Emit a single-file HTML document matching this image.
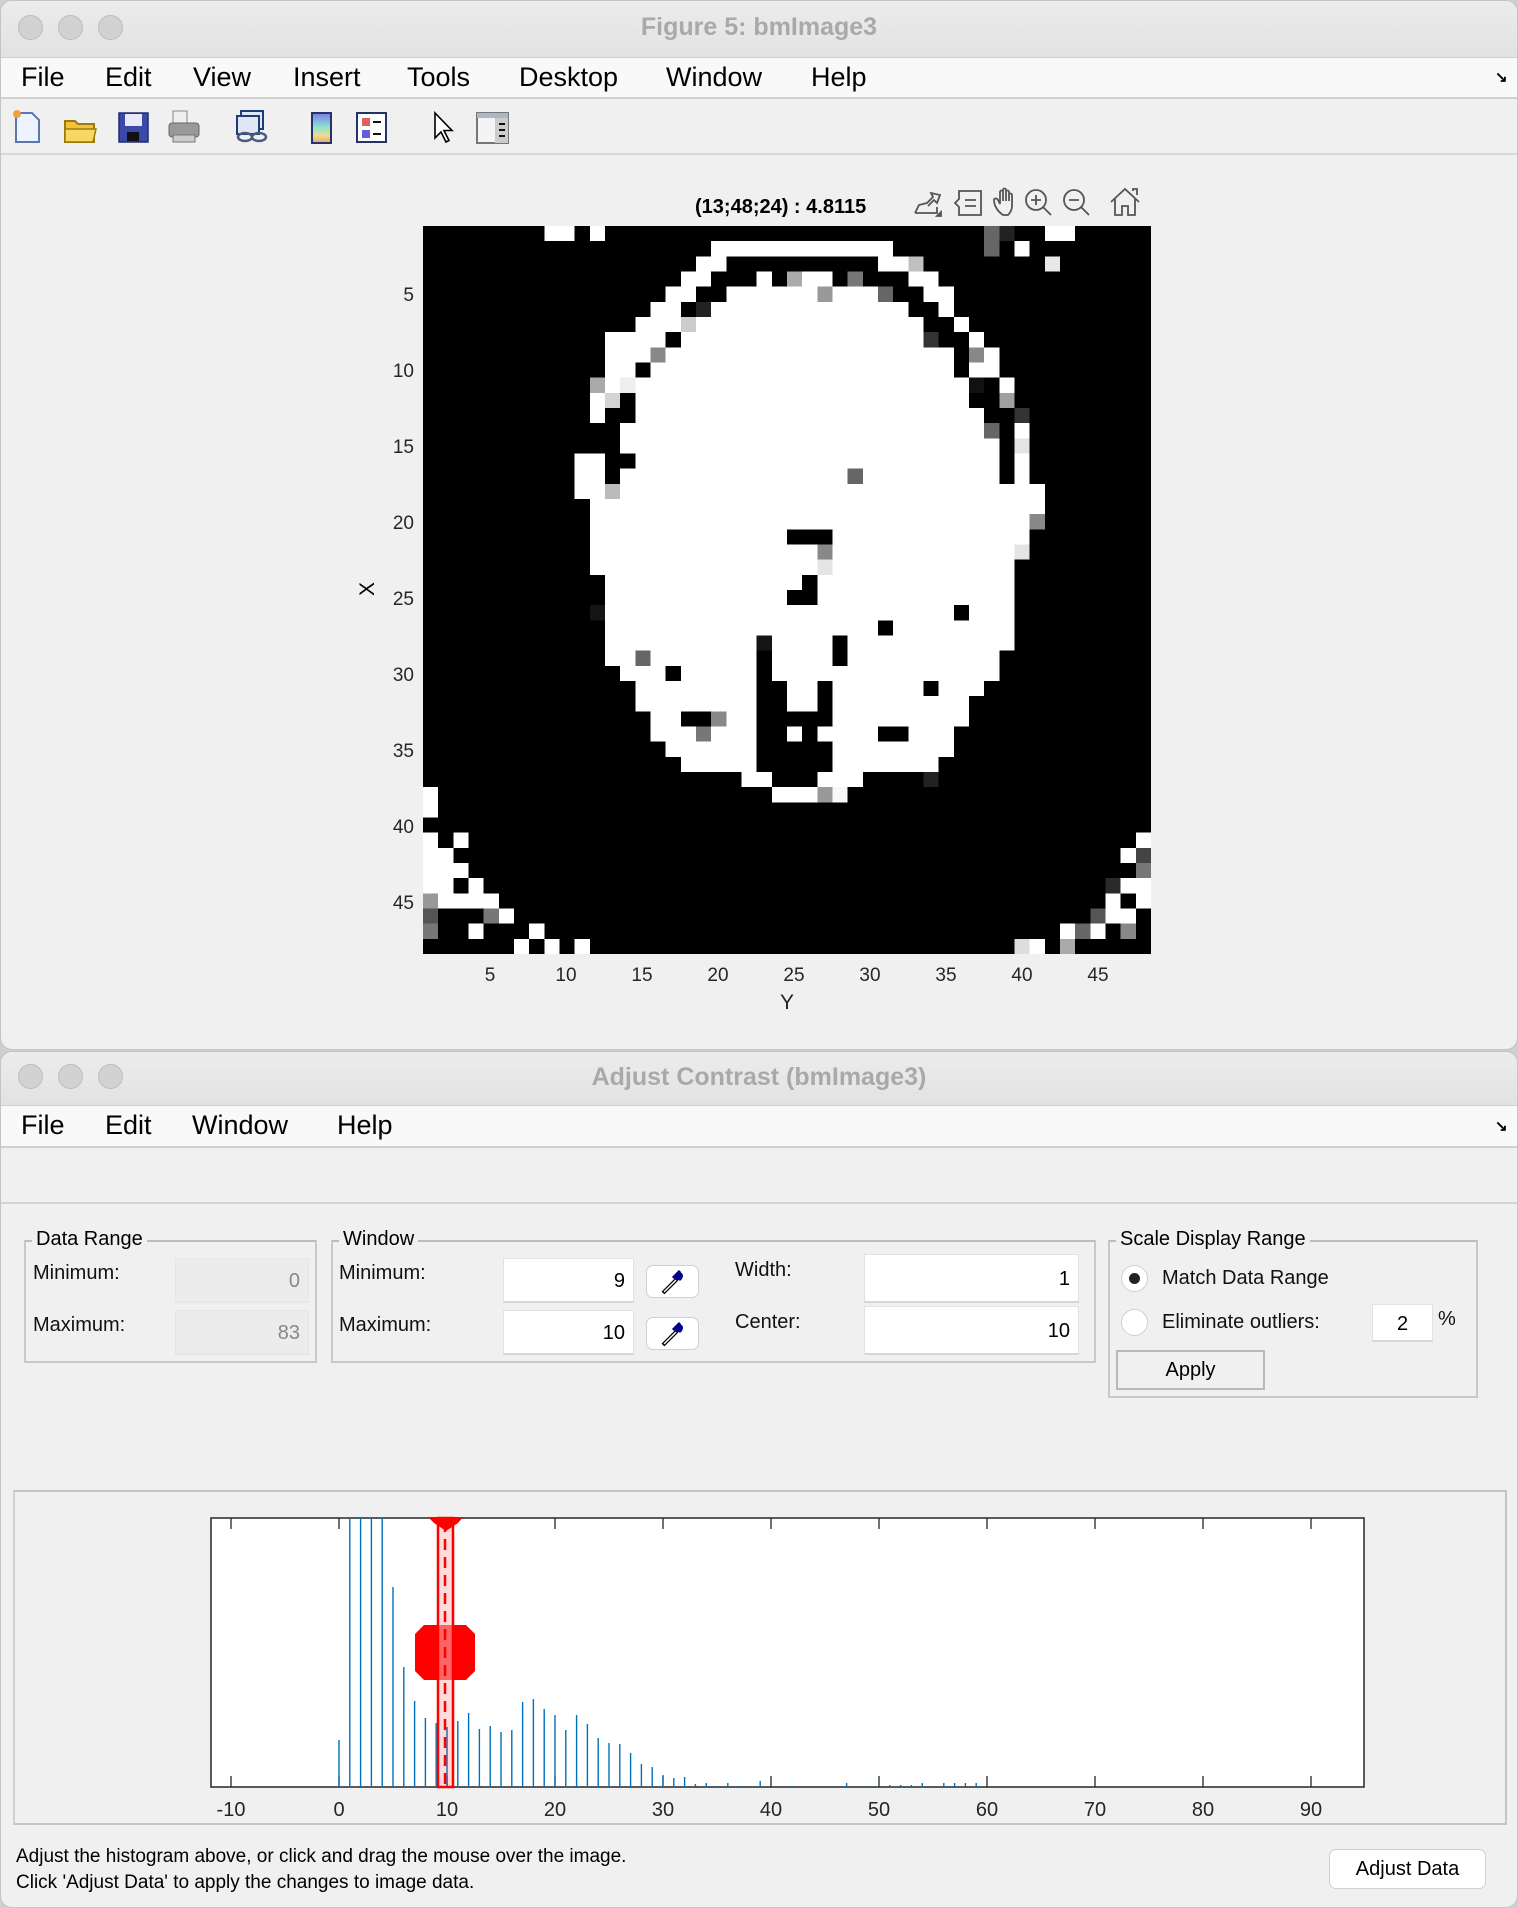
<!DOCTYPE html>
<html><head><meta charset="utf-8"><style>
*{margin:0;padding:0;box-sizing:border-box}
body{width:1518px;height:1908px;background:#cfcfcf;position:relative;overflow:hidden;font-family:"Liberation Sans",sans-serif;color:#000}
.a{position:absolute}
.win{position:absolute;left:0;width:1518px;background:#f0f0f0;border-radius:12px;overflow:hidden;border:1px solid #c4c4c4}
.tb{position:absolute;left:0;top:0;width:100%;background:linear-gradient(#ececec,#e2e2e2);border-bottom:1px solid #cfcfcf}
.dot{position:absolute;width:25px;height:25px;border-radius:50%;background:#d2d2d2;border:1px solid #bdbdbd}
.ttl{position:absolute;left:0;width:100%;text-align:center;font-weight:bold;font-size:25px;color:#a9a9a9}
.mb{position:absolute;left:0;width:100%;background:#f9f9f9;border-bottom:2px solid #d0d0d0}
.mi{position:absolute;font-size:27px;top:4px}
.lbl{position:absolute;font-size:20px;color:#111}
.fld{position:absolute;background:#fff;border:1px solid #e2e2e2;border-bottom:2px solid #d6d6d6;font-size:20px;text-align:right;padding-right:8px}
.dis{background:#ececec;color:#888;border-color:#e6e6e6}
.grp{position:absolute;border:2px solid #c8c8c8;border-top-color:#bcbcbc}
.gt{position:absolute;font-size:20px;background:#f0f0f0;padding:0 4px;top:-14px;left:6px}
.btn{position:absolute;background:#fff;border:1px solid #d0d0d0;border-radius:7px;font-size:20px;text-align:center}
.tk{font-size:19px;fill:#262626;font-family:"Liberation Sans",sans-serif}
</style></head><body>

<!-- WINDOW 1 -->
<div class="win" style="top:0;height:1050px">
  <div class="tb" style="height:57px">
    <div class="dot" style="left:17px;top:14px"></div>
    <div class="dot" style="left:57px;top:14px"></div>
    <div class="dot" style="left:97px;top:14px"></div>
    <div class="ttl" style="top:12px">Figure 5: bmImage3</div>
  </div>
  <div class="mb" style="top:57px;height:41px">
    <span class="mi" style="left:20px">File</span>
    <span class="mi" style="left:104px">Edit</span>
    <span class="mi" style="left:192px">View</span>
    <span class="mi" style="left:292px">Insert</span>
    <span class="mi" style="left:406px">Tools</span>
    <span class="mi" style="left:518px">Desktop</span>
    <span class="mi" style="left:665px">Window</span>
    <span class="mi" style="left:810px">Help</span>
    <span class="a" style="left:1494px;top:10px;font-size:15px;font-weight:bold">↘</span>
  </div>
  <div class="a" style="left:0;top:98px;width:100%;height:56px;border-bottom:2px solid #d8d8d8;background:#f0f0f0">
    <svg class="a" style="left:0;top:0" width="520" height="56" viewBox="0 0 520 56">
      <!-- new -->
      <path d="M15 14h16l7 7v22h-23z" fill="#eef4ff" stroke="#5a78b0" stroke-width="2"/>
      <circle cx="16" cy="15" r="4" fill="#f0a040"/>
      <!-- open -->
      <path d="M64 22h10l3 3h16v18h-29z" fill="#f2c33a" stroke="#a07810" stroke-width="2"/>
      <path d="M64 30h31l-3 13h-28z" fill="#f8d860" stroke="#a07810" stroke-width="1.5"/>
      <!-- save -->
      <rect x="118" y="14" width="29" height="29" fill="#3a4aa8" stroke="#222a70" stroke-width="1.5"/>
      <rect x="124" y="15" width="17" height="12" fill="#e8e8f8"/>
      <rect x="126" y="33" width="12" height="9" fill="#111"/>
      <!-- print -->
      <rect x="172" y="12" width="14" height="12" fill="#eee" stroke="#888"/>
      <rect x="168" y="24" width="30" height="14" rx="3" fill="#999" stroke="#666"/>
      <rect x="172" y="36" width="22" height="7" fill="#ccc" stroke="#777"/>
      <!-- link -->
      <rect x="240" y="12" width="22" height="18" fill="#dfe7f5" stroke="#1e3c78" stroke-width="2"/>
      <rect x="236" y="17" width="22" height="18" fill="#dfe7f5" stroke="#1e3c78" stroke-width="2"/>
      <ellipse cx="244" cy="38" rx="7" ry="4" fill="none" stroke="#4a5a80" stroke-width="2.5"/>
      <ellipse cx="258" cy="38" rx="7" ry="4" fill="none" stroke="#4a5a80" stroke-width="2.5"/>
      <!-- colorbar -->
      <defs><linearGradient id="cb" x1="0" y1="0" x2="0" y2="1"><stop offset="0" stop-color="#7a7ae8"/><stop offset=".45" stop-color="#8ee0d0"/><stop offset=".75" stop-color="#e8e090"/><stop offset="1" stop-color="#f0a070"/></linearGradient></defs>
      <rect x="311" y="14" width="19" height="30" fill="url(#cb)" stroke="#24346a" stroke-width="2"/>
      <!-- legend -->
      <rect x="356" y="14" width="29" height="29" fill="#fff" stroke="#24346a" stroke-width="2"/>
      <rect x="361" y="19" width="8" height="8" fill="#e06060"/><rect x="361" y="31" width="8" height="8" fill="#6060e0"/>
      <rect x="372" y="22" width="8" height="2" fill="#111"/><rect x="372" y="34" width="8" height="2" fill="#111"/>
      <!-- cursor -->
      <path d="M434 14v25l6-6 5 10 3-1.5-5-10h8z" fill="#fff" stroke="#000" stroke-width="1.6"/>
      <!-- property panel -->
      <rect x="476" y="14" width="31" height="30" fill="#f4f4f4" stroke="#777" stroke-width="2"/>
      <rect x="476" y="14" width="31" height="5" fill="#a8b8c8"/>
      <rect x="494" y="19" width="13" height="25" fill="#ccc"/>
      <rect x="498" y="24" width="6" height="2" fill="#111"/><rect x="498" y="30" width="6" height="2" fill="#111"/><rect x="498" y="36" width="6" height="2" fill="#111"/>
    </svg>
  </div>

  <div class="a" style="left:694px;top:195px;font-size:20px;font-weight:bold">(13;48;24) : 4.8115</div>
  <svg class="a" style="left:910px;top:184px" width="240" height="36" viewBox="0 0 240 36" fill="none" stroke="#555" stroke-width="1.8">
    <path d="M4 28h22v-6M4 28l4-8 8-2 6-6-2-4 9 2-3 8-3-3-6 6"/><path d="M26 31l4-4v4z" fill="#555"/>
    <path d="M48 6h22v24h-22v-8l-4-4 4-4z"/><path d="M54 15h11M54 21h11"/>
    <path d="M92 30c-6-4-9-10-9-15 0-2 3-2 4 0l2 4v-12c0-2 3-2 3 0v9-11c0-2 3-2 3 0v11-9c0-2 3-2 3 0v9-6c0-2 3-2 3 0v11c0 4-2 7-4 9z"/>
    <circle cx="125" cy="15" r="10"/><path d="M132 22l8 8M120 15h10M125 10v10"/>
    <circle cx="163" cy="15" r="10"/><path d="M170 22l8 8M158 15h10"/>
    <path d="M200 17l14-13 14 13M204 14v16h7v-9h6v9h7v-16M222 6v-2h4v6"/>
  </svg>

  <!-- image -->
  <svg class="a" style="left:422px;top:225px" width="728" height="728" viewBox="0 0 48 48" shape-rendering="crispEdges">
    <rect width="48" height="48" fill="#000"/>
    <path fill="#fff" d="M8 0h2v1h-2zM11 0h1v1h-1zM41 0h2v1h-2zM19 1h12v1h-12zM39 1h1v1h-1zM18 2h2v1h-2zM30 2h2v1h-2zM17 3h2v1h-2zM22 3h1v1h-1zM25 3h2v1h-2zM32 3h2v1h-2zM16 4h2v1h-2zM20 4h6v1h-6zM27 4h3v1h-3zM33 4h2v1h-2zM15 5h2v1h-2zM19 5h13v1h-13zM34 5h1v1h-1zM14 6h3v1h-3zM18 6h15v1h-15zM35 6h1v1h-1zM12 7h4v1h-4zM17 7h16v1h-16zM36 7h1v1h-1zM12 8h3v1h-3zM16 8h19v1h-19zM37 8h1v1h-1zM12 9h2v1h-2zM15 9h20v1h-20zM36 9h2v1h-2zM12 10h1v1h-1zM14 10h22v1h-22zM38 10h1v1h-1zM11 11h1v1h-1zM14 11h22v1h-22zM11 12h1v1h-1zM14 12h23v1h-23zM13 13h24v1h-24zM39 13h1v1h-1zM13 14h25v1h-25zM10 15h2v1h-2zM14 15h24v1h-24zM39 15h1v1h-1zM10 16h2v1h-2zM13 16h25v1h-25zM39 16h1v1h-1zM10 17h2v1h-2zM13 17h28v1h-28zM11 18h30v1h-30zM11 19h29v1h-29zM11 20h13v1h-13zM27 20h13v1h-13zM11 21h29v1h-29zM11 22h28v1h-28zM12 23h13v1h-13zM26 23h13v1h-13zM12 24h12v1h-12zM26 24h13v1h-13zM12 25h23v1h-23zM36 25h3v1h-3zM12 26h18v1h-18zM31 26h8v1h-8zM12 27h10v1h-10zM23 27h4v1h-4zM28 27h11v1h-11zM12 28h2v1h-2zM15 28h7v1h-7zM23 28h4v1h-4zM28 28h10v1h-10zM13 29h3v1h-3zM17 29h5v1h-5zM23 29h15v1h-15zM14 30h8v1h-8zM24 30h2v1h-2zM27 30h6v1h-6zM34 30h3v1h-3zM14 31h8v1h-8zM24 31h2v1h-2zM27 31h9v1h-9zM15 32h2v1h-2zM20 32h2v1h-2zM27 32h9v1h-9zM15 33h3v1h-3zM19 33h3v1h-3zM24 33h1v1h-1zM26 33h4v1h-4zM32 33h3v1h-3zM16 34h6v1h-6zM27 34h8v1h-8zM17 35h5v1h-5zM27 35h7v1h-7zM21 36h2v1h-2zM26 36h3v1h-3zM23 37h3v1h-3zM0 37h1v2h-1zM0 40h1v1h-1zM2 40h1v1h-1zM47 40h1v1h-1zM0 41h2v1h-2zM46 41h1v1h-1zM0 42h3v1h-3zM0 43h2v1h-2zM3 43h1v1h-1zM46 43h2v1h-2zM1 44h4v1h-4zM45 44h1v1h-1zM47 44h1v1h-1zM5 45h1v1h-1zM45 45h2v1h-2zM3 46h1v1h-1zM7 46h1v1h-1zM42 46h1v1h-1zM44 46h1v1h-1zM6 47h1v1h-1zM8 47h1v1h-1zM10 47h1v1h-1zM40 47h1v1h-1z"/>
    <rect x="37" y="0" width="1" height="2" fill="#666"/><rect x="38" y="0" width="1" height="1" fill="#222"/>
    <rect x="32" y="2" width="1" height="1" fill="#c0c0c0"/><rect x="41" y="2" width="1" height="1" fill="#e8e8e8"/>
    <rect x="24" y="3" width="1" height="1" fill="#aaa"/><rect x="28" y="3" width="1" height="1" fill="#777"/>
    <rect x="26" y="4" width="1" height="1" fill="#999"/><rect x="30" y="4" width="1" height="1" fill="#666"/>
    <rect x="18" y="5" width="1" height="1" fill="#222"/><rect x="17" y="6" width="1" height="1" fill="#ccc"/>
    <rect x="33" y="7" width="1" height="1" fill="#333"/><rect x="15" y="8" width="1" height="1" fill="#888"/><rect x="36" y="8" width="1" height="1" fill="#888"/>
    <rect x="11" y="10" width="1" height="1" fill="#aaa"/><rect x="13" y="10" width="1" height="1" fill="#eee"/><rect x="36" y="10" width="1" height="1" fill="#111"/>
    <rect x="12" y="11" width="1" height="1" fill="#d4d4d4"/><rect x="38" y="11" width="1" height="1" fill="#a0a0a0"/>
    <rect x="39" y="12" width="1" height="1" fill="#333"/><rect x="37" y="13" width="1" height="1" fill="#666"/><rect x="39" y="14" width="1" height="1" fill="#e4e4e4"/>
    <rect x="28" y="16" width="1" height="1" fill="#666"/><rect x="12" y="17" width="1" height="1" fill="#bbb"/><rect x="40" y="19" width="1" height="1" fill="#888"/>
    <rect x="26" y="21" width="1" height="1" fill="#888"/><rect x="39" y="21" width="1" height="1" fill="#e4e4e4"/><rect x="26" y="22" width="1" height="1" fill="#e4e4e4"/>
    <rect x="11" y="25" width="1" height="1" fill="#151515"/><rect x="22" y="27" width="1" height="1" fill="#151515"/><rect x="14" y="28" width="1" height="1" fill="#666"/>
    <rect x="19" y="32" width="1" height="1" fill="#888"/><rect x="18" y="33" width="1" height="1" fill="#777"/><rect x="33" y="36" width="1" height="1" fill="#222"/>
    <rect x="26" y="37" width="1" height="1" fill="#999"/><rect x="27" y="37" width="1" height="1" fill="#f8f8f8"/>
    <rect x="47" y="41" width="1" height="1" fill="#444"/><rect x="47" y="42" width="1" height="1" fill="#777"/><rect x="45" y="43" width="1" height="1" fill="#2a2a2a"/>
    <rect x="0" y="44" width="1" height="1" fill="#999"/><rect x="0" y="45" width="1" height="1" fill="#555"/><rect x="4" y="45" width="1" height="1" fill="#777"/><rect x="44" y="45" width="1" height="1" fill="#555"/>
    <rect x="0" y="46" width="1" height="1" fill="#777"/><rect x="43" y="46" width="1" height="1" fill="#666"/><rect x="46" y="46" width="1" height="1" fill="#888"/>
    <rect x="39" y="47" width="1" height="1" fill="#ddd"/><rect x="42" y="47" width="1" height="1" fill="#aaa"/>
  </svg>
  <!-- axis labels -->
  <svg class="a" style="left:340px;top:270px" width="90" height="650" viewBox="0 0 90 650">
    <g class="tk" text-anchor="end">
      <text x="73" y="30">5</text><text x="73" y="106">10</text><text x="73" y="182">15</text><text x="73" y="258">20</text>
      <text x="73" y="334">25</text><text x="73" y="410">30</text><text x="73" y="486">35</text><text x="73" y="562">40</text><text x="73" y="638">45</text>
    </g>
  </svg>
  <svg class="a" style="left:420px;top:955px" width="740" height="60" viewBox="0 0 740 60">
    <g class="tk" text-anchor="middle">
      <text x="69" y="25">5</text><text x="145" y="25">10</text><text x="221" y="25">15</text><text x="297" y="25">20</text>
      <text x="373" y="25">25</text><text x="449" y="25">30</text><text x="525" y="25">35</text><text x="601" y="25">40</text><text x="677" y="25">45</text>
      <text x="366" y="53" style="font-size:21px">Y</text>
    </g>
  </svg>
  <div class="a" style="left:360px;top:576px;font-size:21px;transform:rotate(-90deg)">X</div>
</div>

<!-- WINDOW 2 -->
<div class="win" style="top:1051px;height:857px">
  <div class="tb" style="height:54px">
    <div class="dot" style="left:17px;top:12px"></div>
    <div class="dot" style="left:57px;top:12px"></div>
    <div class="dot" style="left:97px;top:12px"></div>
    <div class="ttl" style="top:11px">Adjust Contrast (bmImage3)</div>
  </div>
  <div class="mb" style="top:54px;height:42px">
    <span class="mi" style="left:20px">File</span>
    <span class="mi" style="left:104px">Edit</span>
    <span class="mi" style="left:191px">Window</span>
    <span class="mi" style="left:336px">Help</span>
    <span class="a" style="left:1494px;top:11px;font-size:15px;font-weight:bold">↘</span>
  </div>
  <div class="a" style="left:0;top:150px;width:100%;height:2px;background:#d4d4d4"></div>

  <!-- Data Range -->
  <div class="grp" style="left:23px;top:188px;width:293px;height:123px">
    <div class="gt">Data Range</div>
  </div>
  <div class="lbl" style="left:32px;top:210px">Minimum:</div>
  <div class="lbl" style="left:32px;top:262px">Maximum:</div>
  <div class="fld dis" style="left:174px;top:206px;width:134px;height:45px;line-height:45px">0</div>
  <div class="fld dis" style="left:174px;top:258px;width:134px;height:45px;line-height:45px">83</div>

  <!-- Window -->
  <div class="grp" style="left:330px;top:188px;width:765px;height:123px">
    <div class="gt">Window</div>
  </div>
  <div class="lbl" style="left:338px;top:210px">Minimum:</div>
  <div class="lbl" style="left:338px;top:262px">Maximum:</div>
  <div class="fld" style="left:502px;top:206px;width:131px;height:45px;line-height:45px">9</div>
  <div class="fld" style="left:502px;top:258px;width:131px;height:45px;line-height:45px">10</div>
  <div class="btn" style="left:645px;top:213px;width:53px;height:33px"><svg width="51" height="31" viewBox="0 0 51 31"><path d="M16 27l14-14" stroke="#000" stroke-width="4"/><path d="M17 26l12-12" stroke="#fff" stroke-width="1.5"/><circle cx="32" cy="10" r="4" fill="#00008b"/><path d="M26 12l7-7M28 8l6 6" stroke="#00008b" stroke-width="3"/></svg></div>
  <div class="btn" style="left:645px;top:265px;width:53px;height:33px"><svg width="51" height="31" viewBox="0 0 51 31"><path d="M16 27l14-14" stroke="#000" stroke-width="4"/><path d="M17 26l12-12" stroke="#fff" stroke-width="1.5"/><circle cx="32" cy="10" r="4" fill="#00008b"/><path d="M26 12l7-7M28 8l6 6" stroke="#00008b" stroke-width="3"/></svg></div>
  <div class="lbl" style="left:734px;top:207px">Width:</div>
  <div class="lbl" style="left:734px;top:259px">Center:</div>
  <div class="fld" style="left:863px;top:202px;width:215px;height:49px;line-height:49px">1</div>
  <div class="fld" style="left:863px;top:254px;width:215px;height:49px;line-height:49px">10</div>

  <!-- Scale Display -->
  <div class="grp" style="left:1107px;top:188px;width:370px;height:158px">
    <div class="gt">Scale Display Range</div>
  </div>
  <div class="a" style="left:1120px;top:213px;width:27px;height:27px;border-radius:50%;background:#fff;border:1px solid #d0d0d0"><div class="a" style="left:7px;top:7px;width:11px;height:11px;border-radius:50%;background:#222"></div></div>
  <div class="a" style="left:1120px;top:257px;width:27px;height:27px;border-radius:50%;background:#fff;border:1px solid #d0d0d0"></div>
  <div class="lbl" style="left:1161px;top:215px">Match Data Range</div>
  <div class="lbl" style="left:1161px;top:259px">Eliminate outliers:</div>
  <div class="fld" style="left:1371px;top:252px;width:61px;height:38px;line-height:38px;text-align:center;padding:0">2</div>
  <div class="lbl" style="left:1437px;top:256px">%</div>
  <div class="a" style="left:1115px;top:298px;width:149px;height:40px;border:2px solid #b8b8b8;background:#f0f0f0;font-size:20px;text-align:center;line-height:36px">Apply</div>

  <!-- Histogram panel -->
  <div class="a" style="left:12px;top:438px;width:1494px;height:335px;border:2px solid #c4c4c4;border-left-color:#d0d0d0"></div>
  <svg class="a" style="left:180px;top:462px" width="1220" height="320" viewBox="180 1513 1220 320">
    <rect x="210" y="1517" width="1153" height="269" fill="#fff" stroke="#262626" stroke-width="1.5"/>
    <g stroke="#262626" stroke-width="1.3">
      <path d="M230 1517v11M338 1517v11M446 1517v11M554 1517v11M662 1517v11M770 1517v11M878 1517v11M986 1517v11M1094 1517v11M1202 1517v11M1310 1517v11"/>
      <path d="M230 1786v-11M338 1786v-11M446 1786v-11M554 1786v-11M662 1786v-11M770 1786v-11M878 1786v-11M986 1786v-11M1094 1786v-11M1202 1786v-11M1310 1786v-11"/>
    </g>
    <g transform="translate(338 1517)" stroke="#0072bd" stroke-width="1.4">
      <path d="M0 269V222M10.8 269V0M21.6 269V0M32.4 269V0M43.2 269V0M54 269V69M64.8 269V149M75.6 269V183M86.4 269V200M97.2 269V205M108 269V209M118.8 269V203M129.6 269V195M140.4 269V211M151.2 269V208M162 269V214M172.8 269V212M183.6 269V184M194.4 269V181M205.2 269V191M216 269V197M226.8 269V212M237.6 269V197M248.4 269V206M259.2 269V220M270 269V225M280.8 269V226M291.6 269V235M302.4 269V246M313.2 269V249M324 269V257M334.8 269V260M345.6 269V259M356.4 269V266M367.2 269V265M378 269V268M388.8 269V265M399.6 269V268M421.2 269V263M442.8 269V268M453.6 269V268M464.4 269V268M507.6 269V265M529.2 269V268M550.8 269V267M561.6 269V267M572.4 269V267M583.2 269V265M604.8 269V265M615.6 269V265M626.4 269V265M637.2 269V265M658.8 269V268M874.8 269V268M896.4 269V268"/>
    </g>
    <rect x="437" y="1517" width="15" height="269" fill="rgba(255,0,0,0.14)" stroke="#f00" stroke-width="2.5"/>
    <path d="M444 1520v269" stroke="#f00" stroke-width="2.5" stroke-dasharray="11 7"/>
    <path d="M427 1516h35l-5 6-12 8-12-8z" fill="#f00"/>
    <path d="M423 1624h13v55h-13l-9-9v-37z" fill="#f00"/>
    <path d="M452 1624h13l9 9v37l-9 9h-13z" fill="#f00"/>
    <rect x="436" y="1624" width="16" height="55" fill="rgba(255,0,0,0.55)"/>
    <g class="tk" text-anchor="middle" style="font-size:20px">
      <text x="230" y="1815">-10</text><text x="338" y="1815">0</text><text x="446" y="1815">10</text><text x="554" y="1815">20</text><text x="662" y="1815">30</text><text x="770" y="1815">40</text><text x="878" y="1815">50</text><text x="986" y="1815">60</text><text x="1094" y="1815">70</text><text x="1202" y="1815">80</text><text x="1310" y="1815">90</text>
    </g>
  </svg>

  <div class="a" style="left:15px;top:792px;font-size:19px;line-height:26px">Adjust the histogram above, or click and drag the mouse over the image.<br>Click 'Adjust Data' to apply the changes to image data.</div>
  <div class="btn" style="left:1328px;top:797px;width:157px;height:40px;line-height:38px">Adjust Data</div>
</div>
</body></html>
